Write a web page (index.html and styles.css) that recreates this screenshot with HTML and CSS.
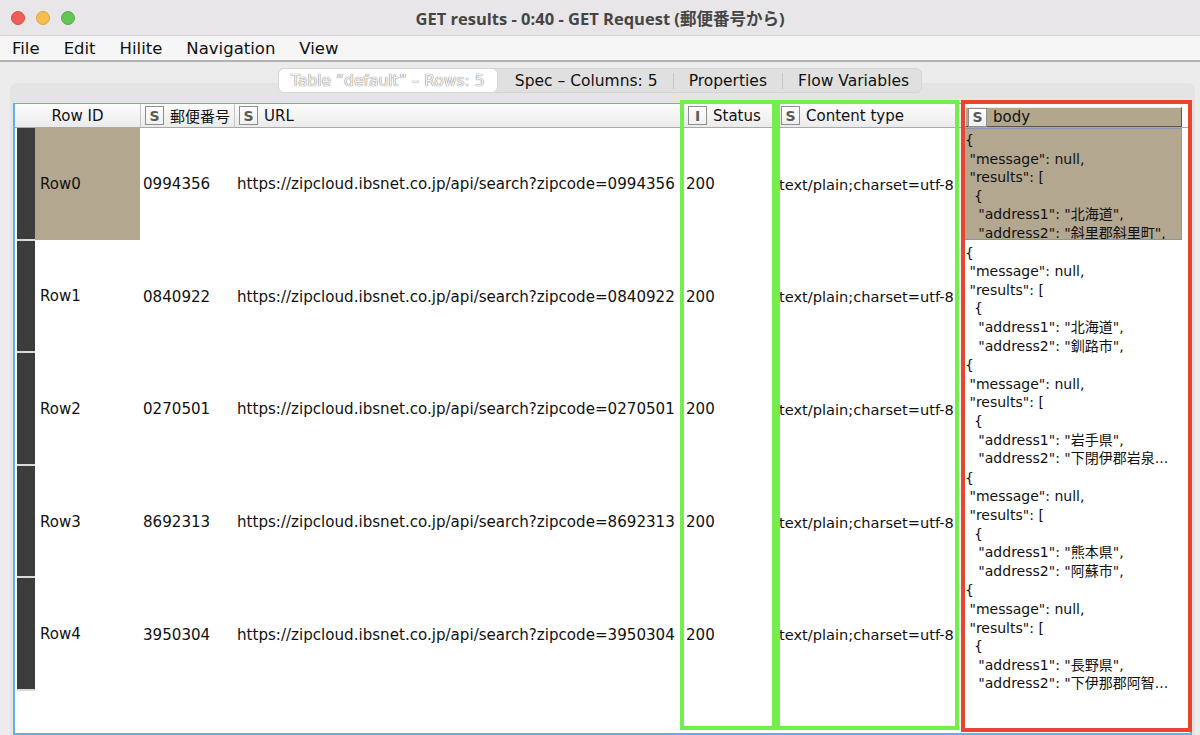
FILE: index.html
```html
<!DOCTYPE html>
<html>

<head>
  <meta charset="UTF-8">
  <title>GET results</title>
  <link rel="stylesheet" href="styles.css">
</head>

<body>
  <div class="window">

    <div class="titlebar">
      <div class="lights">
        <span class="light red"></span>
        <span class="light yellow"></span>
        <span class="light green"></span>
      </div>
      <div class="title">GET results - 0:40 - GET Request (郵便番号から)</div>
    </div>

    <div class="menubar">
      <span>File</span>
      <span>Edit</span>
      <span>Hilite</span>
      <span>Navigation</span>
      <span>View</span>
    </div>

    <div class="content">
      <div class="tabs">
        <div class="seg">
          <span class="tab sel">Table “default” – Rows: 5</span>
          <span class="tab t-spec">Spec – Columns: 5</span>
          <span class="sep"></span>
          <span class="tab t-props">Properties</span>
          <span class="sep"></span>
          <span class="tab t-flow">Flow Variables</span>
        </div>
      </div>

      <div class="panel">
        <div class="frame">
          <div class="grid">
            <!-- cabecera -->
            <div class="hd hd-rid">Row ID</div>
            <div class="hd"><span class="icon">S</span>郵便番号</div>
            <div class="hd"><span class="icon">S</span>URL</div>
            <div class="hd"><span class="icon">I</span>Status</div>
            <div class="hd"><span class="icon">S</span>Content type</div>
            <div class="hd hd-body"><div class="raised"><span class="icon">S</span>body</div></div>
            <div class="hd hd-fill"></div>

            <!-- Row0 -->
            <div class="rid sel"><span class="bar"></span><span class="rlabel">Row0</span></div>
            <div class="cell">0994356</div>
            <div class="cell">https://zipcloud.ibsnet.co.jp/api/search?zipcode=0994356</div>
            <div class="cell">200</div>
            <div class="cell ct">text/plain;charset=utf-8</div>
            <div class="json sel">{
 "message": null,
 "results": [
  {
   "address1": "北海道",
   "address2": "斜里郡斜里町",</div>
            <div class="fill"></div>

            <!-- Row1 -->
            <div class="rid"><span class="bar"></span><span class="rlabel">Row1</span></div>
            <div class="cell">0840922</div>
            <div class="cell">https://zipcloud.ibsnet.co.jp/api/search?zipcode=0840922</div>
            <div class="cell">200</div>
            <div class="cell ct">text/plain;charset=utf-8</div>
            <div class="json">{
 "message": null,
 "results": [
  {
   "address1": "北海道",
   "address2": "釧路市",</div>
            <div class="fill"></div>

            <!-- Row2 -->
            <div class="rid"><span class="bar"></span><span class="rlabel">Row2</span></div>
            <div class="cell">0270501</div>
            <div class="cell">https://zipcloud.ibsnet.co.jp/api/search?zipcode=0270501</div>
            <div class="cell">200</div>
            <div class="cell ct">text/plain;charset=utf-8</div>
            <div class="json">{
 "message": null,
 "results": [
  {
   "address1": "岩手県",
   "address2": "下閉伊郡岩泉...</div>
            <div class="fill"></div>

            <!-- Row3 -->
            <div class="rid"><span class="bar"></span><span class="rlabel">Row3</span></div>
            <div class="cell">8692313</div>
            <div class="cell">https://zipcloud.ibsnet.co.jp/api/search?zipcode=8692313</div>
            <div class="cell">200</div>
            <div class="cell ct">text/plain;charset=utf-8</div>
            <div class="json">{
 "message": null,
 "results": [
  {
   "address1": "熊本県",
   "address2": "阿蘇市",</div>
            <div class="fill"></div>

            <!-- Row4 -->
            <div class="rid"><span class="bar"></span><span class="rlabel">Row4</span></div>
            <div class="cell">3950304</div>
            <div class="cell">https://zipcloud.ibsnet.co.jp/api/search?zipcode=3950304</div>
            <div class="cell">200</div>
            <div class="cell ct">text/plain;charset=utf-8</div>
            <div class="json">{
 "message": null,
 "results": [
  {
   "address1": "長野県",
   "address2": "下伊那郡阿智...</div>
            <div class="fill"></div>
          </div>
        </div>
      </div>
    </div>

    <!-- marcas de anotacion -->
    <div class="mark m-status"></div>
    <div class="mark m-ctype"></div>
    <div class="mark m-body"></div>
  </div>
</body>

</html>
```

FILE: styles.css
```css
* {
  box-sizing: border-box;
}

html,
body {
  margin: 0;
}

body {
  width: 1200px;
  height: 735px;
  overflow: hidden;
  background: #ececec;
  font-family: "DejaVu Sans", "Noto Sans CJK JP", sans-serif;
  color: #111;
}

.window {
  position: relative;
  height: 735px;
  display: flex;
  flex-direction: column;
}

/* barra de titulo */
.titlebar {
  flex: none;
  height: 36px;
  background: #e8e6e8;
  border-bottom: 1px solid #d2d0d2;
  display: grid;
  grid-template-columns: 1fr auto 1fr;
  align-items: center;
}

.lights {
  display: flex;
  gap: 11px;
  padding-left: 11px;
}

.light {
  width: 14px;
  height: 14px;
  border-radius: 50%;
}

.red {
  background: #ee5f58;
  border: 1px solid #dc4b43;
}

.yellow {
  background: #f6bd4f;
  border: 1px solid #dea33a;
}

.green {
  background: #62c555;
  border: 1px solid #4fae43;
}

.title {
  font-family: "Open Sans", "Noto Sans CJK JP", sans-serif;
  font-weight: 700;
  font-size: 16.5px;
  color: #454545;
}

/* menu */
.menubar {
  flex: none;
  height: 26px;
  background: #f6f6f6;
  border-bottom: 2px solid #b3b3b3;
  display: flex;
  align-items: center;
  font-size: 16.5px;
  color: #111;
  padding-top: 1px;
}

.menubar span {
  padding: 0 12px;
}

/* contenido */
.content {
  flex: 1;
  min-height: 0;
  display: flex;
  flex-direction: column;
}

.tabs {
  display: flex;
  justify-content: center;
  margin-top: 6px;
  margin-bottom: -10px;
  position: relative;
  z-index: 1;
}

.seg {
  display: flex;
  align-items: center;
  height: 25px;
  background: #e0e0e0;
  border: 1px solid #d5d5d5;
  border-radius: 6px;
  font-size: 15.5px;
  white-space: nowrap;
}

.tab {
  padding: 0 15px;
}

.tab.sel {
  width: 220px;
  height: 25px;
  padding: 0;
  margin: -1px 0 -1px -1px;
  background: #fff;
  border: 1px solid #d6d6d6;
  border-radius: 6px;
  display: flex;
  align-items: center;
  justify-content: center;
  color: #f2f2f2;
  text-shadow: 0 0 1px #7c7c7c, 0 0 1px #8a8a8a;
}

.t-spec {
  padding-left: 17px;
}

.t-flow {
  padding-right: 12px;
}

.sep {
  width: 1px;
  height: 16px;
  background: #c6c6c6;
}

.panel {
  flex: 1;
  min-height: 0;
  margin: 0 5px 0 10px;
  padding: 20px 3px 0 3px;
  background: #e4e4e4;
  border-radius: 7px 7px 0 0;
  display: flex;
  flex-direction: column;
}

.frame {
  flex: 1;
  min-height: 0;
  background: #fff;
  border: 2px solid #62adf3;
  border-top-width: 1px;
  overflow: hidden;
}

/* tabla */
.grid {
  display: grid;
  grid-template-columns: 126px 94px 449px 93px 186px 220px 1fr;
  grid-template-rows: 24px repeat(5, 112.6px);
}

.hd {
  display: flex;
  align-items: center;
  font-size: 15px;
  white-space: nowrap;
  overflow: hidden;
  background: linear-gradient(#fdfdfd, #ebebeb);
  border-bottom: 1px solid #a9a9a9;
  border-right: 1px solid #c6c6c6;
}

.hd-rid {
  justify-content: center;
}

.hd-body {
  background: #fff;
  border-right: none;
  align-items: stretch;
  padding: 3px 1px 0 2px;
}

.hd-fill {
  background: #fff;
  border-right: none;
}

.raised {
  flex: 1;
  display: flex;
  align-items: center;
  background: #b2a68d;
  border: 1px solid;
  border-color: #efe9dd #5d5447 #5d5447 #efe9dd;
}

.icon {
  flex: none;
  width: 19px;
  height: 19px;
  margin: 0 6px 0 4px;
  border: 1px solid #8e8e8e;
  background: linear-gradient(#fff, #f0f0f0);
  display: flex;
  align-items: center;
  justify-content: center;
  font-size: 14px;
  font-weight: bold;
  color: #5a5a5a;
}

.raised .icon {
  margin-left: 2px;
}

.rid {
  display: flex;
  padding-left: 2px;
}

.bar {
  width: 18px;
  background: #3c3c3c;
  border-bottom: 2px solid #dadada;
}

.rlabel {
  flex: 1;
  display: flex;
  align-items: center;
  padding-left: 5px;
  margin: 0 1px 1px 0;
  font-size: 15px;
}

.rid.sel .rlabel {
  background: #b3a78f;
}

.cell {
  display: flex;
  align-items: center;
  padding-left: 2px;
  font-size: 15.1px;
  white-space: nowrap;
  overflow: hidden;
}

.cell.ct {
  font-size: 14.6px;
}

.json {
  padding: 3px 0 0 2px;
  font-size: 14px;
  line-height: 18.6px;
  white-space: pre;
  overflow: hidden;
}

.json.sel {
  background: #b3a78f;
  border: 1px solid #8795b5;
  padding: 2px 0 0 1px;
  margin: 0 1px 1px 0;
}

/* recuadros de colores */
.mark {
  position: absolute;
  top: 100px;
  height: 630px;
  border: 4px solid #74ee4c;
}

.m-status {
  left: 680px;
  width: 96px;
}

.m-ctype {
  left: 776px;
  width: 183px;
}

.m-body {
  left: 961px;
  width: 231px;
  height: 632px;
  border-color: #e8442f;
}
```
